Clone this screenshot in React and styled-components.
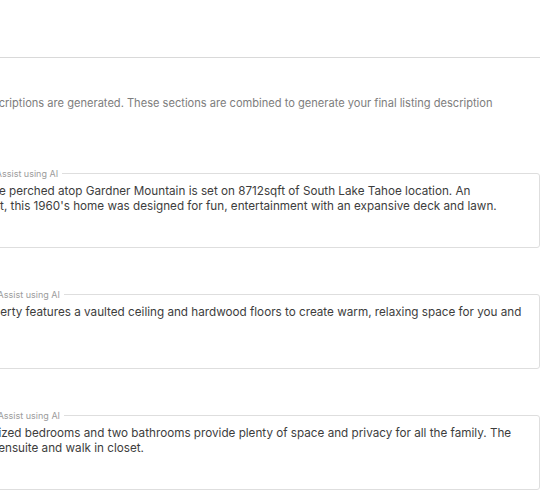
import React from 'react';
import styled, { createGlobalStyle } from 'styled-components';

const sections = [
  {
    label: 'Section 1 – Assist using AI',
    text:
      'This home perched atop Gardner Mountain is set on 8712sqft of South Lake Tahoe location. An\n' +
      "idyllic plot, this 1960's home was designed for fun, entertainment with an expansive deck and lawn.",
  },
  {
    label: 'Section 2 – Assist using AI',
    text:
      'This property features a vaulted ceiling and hardwood floors to create warm, relaxing space for you and\n' +
      'friends.',
  },
  {
    label: 'Section 3 – Assist using AI',
    text:
      'All well-sized bedrooms and two bathrooms provide plenty of space and privacy for all the family. The\n' +
      'best has ensuite and walk in closet.',
  },
];

function App() {
  return (
    <>
      <GlobalStyle />
      <Page>
        <Header />
        <Intro>
          Section descriptions are generated. These sections are combined to generate your final
          listing description
        </Intro>
        <Sections>
          {sections.map((s) => (
            <Field key={s.label}>
              <Legend>{s.label}</Legend>
              <TextArea defaultValue={s.text} spellCheck={false} />
            </Field>
          ))}
        </Sections>
      </Page>
    </>
  );
}

export default App;

const GlobalStyle = createGlobalStyle`
  html, body {
    margin: 0;
    background: #ffffff;
    overflow: hidden;
  }
  body {
    font-family: Inter, 'Liberation Sans', sans-serif;
  }
`;

const Page = styled.div`
  display: flex;
  flex-direction: column;
  width: 603px;
  margin-left: -63px;
`;

const Header = styled.div`
  height: 57px;
  border-bottom: 1px solid #d9d9d9;
`;

const Intro = styled.p`
  margin: 38px 0 0;
  font-size: 11.1px;
  line-height: 14px;
  color: #7d7d7d;
  white-space: nowrap;
`;

const Sections = styled.div`
  display: flex;
  flex-direction: column;
  gap: 41px;
  margin-top: 58px;
`;

const Field = styled.fieldset`
  margin: 0;
  padding: 0 10px 1px;
  border: 1px solid #dedede;
  border-radius: 3px;
  min-width: 0;
`;

const Legend = styled.legend`
  margin-left: -4px;
  padding: 0 4px;
  font-size: 9px;
  line-height: 11px;
  color: #9c9c9c;
`;

const TextArea = styled.textarea`
  display: block;
  width: 100%;
  height: 62px;
  margin: 5px 0 0;
  padding: 0;
  border: none;
  outline: none;
  resize: none;
  overflow: hidden;
  white-space: pre;
  font-family: Inter, 'Liberation Sans', sans-serif;
  font-size: 11.7px;
  line-height: 15px;
  color: #3d3d3d;
  background: transparent;
`;
